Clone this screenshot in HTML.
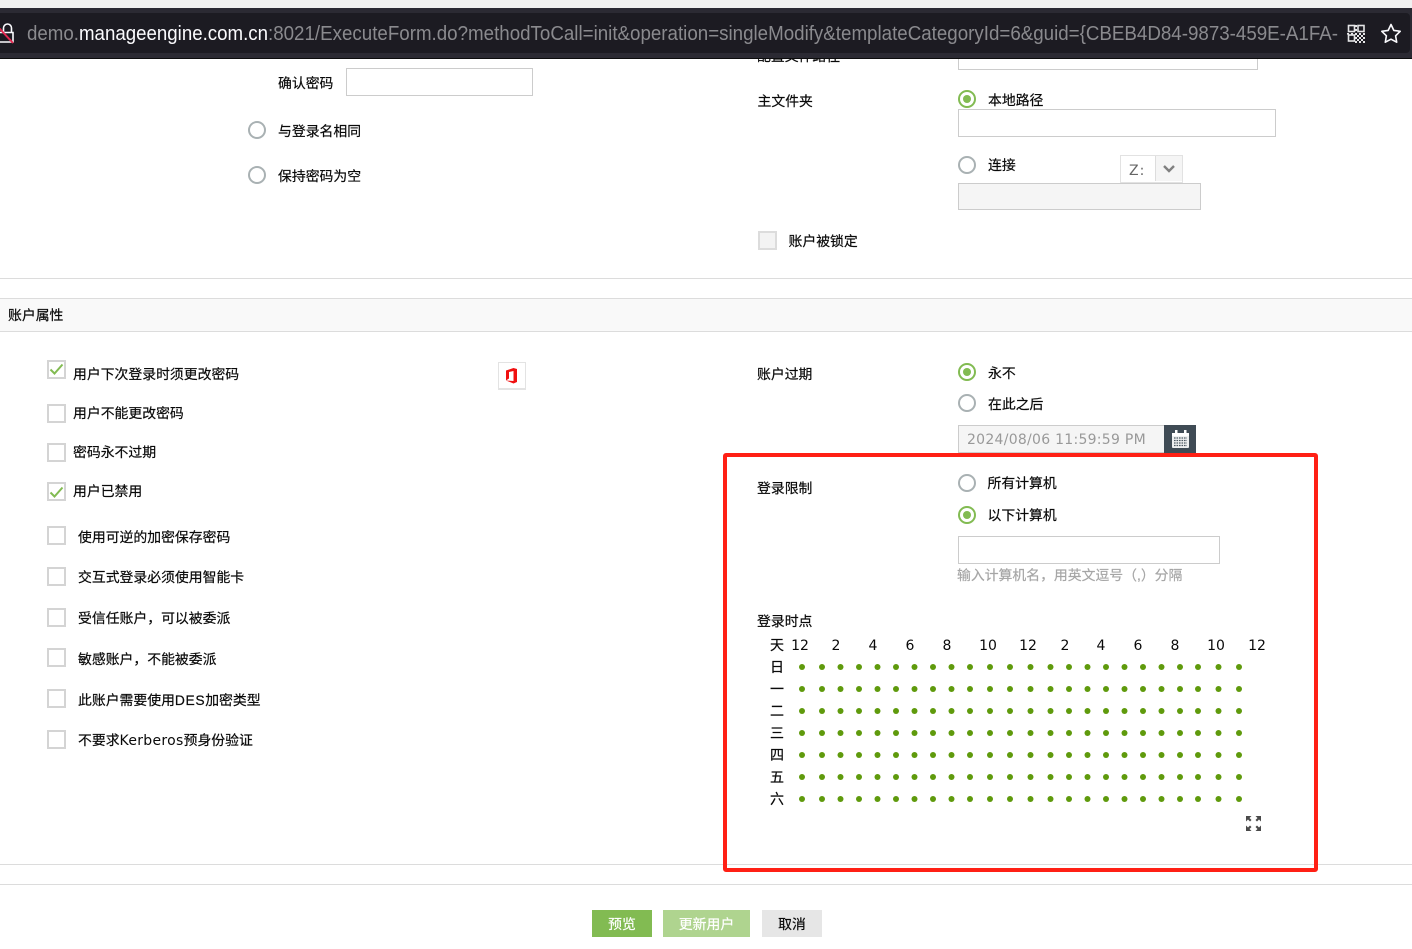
<!DOCTYPE html>
<html lang="zh">
<head>
<meta charset="utf-8">
<title>更新用户</title>
<style>
html,body{margin:0;padding:0;background:#fff;}
body{position:relative;width:1412px;height:949px;overflow:hidden;font-family:"Liberation Sans","Noto Sans CJK SC",sans-serif;font-size:13.85px;color:#0a0a0a;}
.t{position:absolute;line-height:20px;height:20px;white-space:nowrap;-webkit-text-stroke:.2px currentColor;}
.c{position:absolute;width:30px;text-align:center;line-height:20px;height:20px;white-space:nowrap;font-size:14px;-webkit-text-stroke:.2px currentColor;}
.n{font-family:"DejaVu Sans",sans-serif;margin-top:1px;-webkit-text-stroke:0;}
.t.n{font-size:14px;-webkit-text-stroke:0;margin-top:1px;}
.kb{font-family:"DejaVu Sans",sans-serif;font-size:14px;letter-spacing:.3px;-webkit-text-stroke:0;}
.r{position:absolute;width:14px;height:14px;border:2px solid #a9b1b3;border-radius:50%;background:#fff;}
.r.on{border-color:#82bb52;}
.r.on:after{content:"";position:absolute;left:3px;top:3px;width:8px;height:8px;border-radius:50%;background:#82bb52;}
.k{position:absolute;left:47px;width:15px;height:15px;border:2px solid #d4d4d4;background:#fff;}
.i{position:absolute;box-sizing:border-box;border:1px solid #ccc;background:#fff;}
.d{background:#f5f5f5;}
.h{position:absolute;left:0;width:1412px;height:1px;background:#dcdcdc;}
.b{position:absolute;top:910px;height:27px;line-height:29px;text-align:center;-webkit-text-stroke:.2px currentColor;}
svg{position:absolute;overflow:visible;}
</style>
</head>
<body>
<div class="t" style="left:757px;top:46px">配置文件路径</div>
<div class="i" style="left:958px;top:50px;width:300px;height:20px"></div>

<div style="position:absolute;left:0;top:0;width:1412px;height:8px;background:#f1f1f1"></div>
<div style="position:absolute;left:0;top:8px;width:1412px;height:50px;background:#2b2a33"></div>
<div style="position:absolute;left:0;top:13px;width:1410px;height:40px;background:#1c1b22;border-radius:0 4px 4px 0"></div>
<div style="position:absolute;left:0;top:58px;width:1412px;height:1px;background:#0c0c0d"></div>
<svg style="left:0;top:0" width="1412" height="59">
  <g font-family="Liberation Sans, sans-serif" font-size="20">
    <text x="27" y="40" fill="#8a8a8e" textLength="52" lengthAdjust="spacingAndGlyphs">demo.</text>
    <text x="79" y="40" fill="#fbfbfe" textLength="189" lengthAdjust="spacingAndGlyphs">manageengine.com.cn</text>
    <text x="268" y="40" fill="#8a8a8e" textLength="1070" lengthAdjust="spacingAndGlyphs">:8021/ExecuteForm.do?methodToCall=init&amp;operation=singleModify&amp;templateCategoryId=6&amp;guid={CBEB4D84-9873-459E-A1FA-</text>
  </g>
  <!-- lock -->
  <path d="M3.500 32V28a4 4 0 0 1 8 0v4" fill="none" stroke="#fbfbfe" stroke-width="1.600"/>
  <path d="M-2 32.500h15v9.500H-2z" fill="none" stroke="#fbfbfe" stroke-width="1.600"/>
  <path d="M-1 28L13 43" stroke="#e22850" stroke-width="2"/>
  <!-- QR -->
  <g fill="none" stroke="#e4e4e6" stroke-width="1.600">
    <rect x="1348.500" y="25.500" width="6" height="6"/>
    <rect x="1358" y="25.500" width="6" height="6"/>
    <rect x="1348.500" y="35" width="6" height="6"/>
  </g>
  <g fill="#e4e4e6">
    <rect x="1347" y="33" width="2" height="1.600"/><rect x="1351" y="33" width="2" height="1.600"/><rect x="1355" y="33" width="2" height="2"/><rect x="1359" y="33" width="2" height="2"/><rect x="1363" y="33" width="2" height="2"/>
    <rect x="1357" y="35" width="2" height="2"/><rect x="1361" y="35" width="2" height="2"/><rect x="1355" y="37" width="2" height="2"/><rect x="1359" y="37" width="2" height="2"/><rect x="1363" y="37" width="2" height="2"/>
    <rect x="1357" y="39" width="2" height="2"/><rect x="1361" y="39" width="2" height="2"/><rect x="1355" y="41" width="2" height="2"/><rect x="1359" y="41" width="2" height="2"/><rect x="1363" y="41" width="2" height="2"/>
    <rect x="1355" y="25" width="2" height="2"/><rect x="1355" y="29" width="2" height="2"/>
  </g>
  <!-- star -->
  <path d="M1391 24.500l2.800 5.900 6.400.9-4.600 4.500 1.100 6.400-5.700-3-5.700 3 1.100-6.400-4.600-4.500 6.400-.9z" fill="none" stroke="#fbfbfe" stroke-width="1.600" stroke-linejoin="round"/>
</svg>

<!-- upper left -->
<div class="t" style="left:278px;top:73px">确认密码</div>
<div class="i" style="left:346px;top:68px;width:187px;height:28px"></div>
<div class="r" style="left:248px;top:121px"></div>
<div class="t" style="left:278px;top:121px">与登录名相同</div>
<div class="r" style="left:248px;top:166px"></div>
<div class="t" style="left:278px;top:166px">保持密码为空</div>

<!-- upper right -->
<div class="t" style="left:757.500px;top:91px">主文件夹</div>
<div class="r on" style="left:958px;top:90px"></div>
<div class="t" style="left:988px;top:90px">本地路径</div>
<div class="i" style="left:958px;top:109px;width:318px;height:28px"></div>
<div class="r" style="left:958px;top:156px"></div>
<div class="t" style="left:988px;top:155px">连接</div>
<div class="i" style="left:1120px;top:155px;width:63px;height:28px;border-color:#e2e2e2"></div>
<div style="position:absolute;left:1155px;top:156px;width:27px;height:25px;background:#f5f5f5;border-left:1px solid #ddd;box-sizing:border-box"></div>
<div class="t n" style="left:1129px;top:160px;color:#666;letter-spacing:1px">Z:</div>
<svg style="left:1155px;top:155px" width="28" height="28"><path d="M9 11l5 5 5-5" fill="none" stroke="#808080" stroke-width="2.400"/></svg>
<div class="i d" style="left:958px;top:183px;width:243px;height:27px"></div>
<div class="k" style="left:758px;top:231px;background:#f3f3f3;border-color:#dcdcdc"></div>
<div class="t" style="left:788.500px;top:231px">账户被锁定</div>

<div class="h" style="top:278px"></div>
<div style="position:absolute;left:0;top:298px;width:1412px;height:34px;box-sizing:border-box;background:#f9f9f9;border-top:1px solid #dcdcdc;border-bottom:1px solid #dcdcdc"></div>
<div class="t" style="left:8px;top:305px">账户属性</div>

<!-- checkboxes -->
<div class="k" style="top:360px"></div>
<svg style="left:47px;top:360px" width="19" height="19"><path d="M3.500 9.500l4 4 8-9" fill="none" stroke="#82bb52" stroke-width="2"/></svg>
<div class="t" style="left:73px;top:364px">用户下次登录时须更改密码</div>
<div class="k" style="top:404px"></div>
<div class="t" style="left:73px;top:403px">用户不能更改密码</div>
<div class="k" style="top:443px"></div>
<div class="t" style="left:73px;top:442px">密码永不过期</div>
<div class="k" style="top:482px"></div>
<svg style="left:47px;top:482px" width="19" height="19"><path d="M3.500 10.500l4 4 8-9" fill="none" stroke="#82bb52" stroke-width="2"/></svg>
<div class="t" style="left:73px;top:481px">用户已禁用</div>
<div class="k" style="top:526px"></div>
<div class="t" style="left:78px;top:527px">使用可逆的加密保存密码</div>
<div class="k" style="top:567px"></div>
<div class="t" style="left:78px;top:567px">交互式登录必须使用智能卡</div>
<div class="k" style="top:608px"></div>
<div class="t" style="left:78px;top:608px">受信任账户，可以被委派</div>
<div class="k" style="top:648px"></div>
<div class="t" style="left:78px;top:649px">敏感账户，不能被委派</div>
<div class="k" style="top:689px"></div>
<div class="t" style="left:78px;top:690px">此账户需要使用<span style="letter-spacing:.6px">DES</span>加密类型</div>
<div class="k" style="top:730px"></div>
<div class="t" style="left:78px;top:730px">不要求<span class="kb">Kerberos</span>预身份验证</div>

<!-- office -->
<div style="position:absolute;left:498px;top:362px;width:28px;height:28px;box-sizing:border-box;border:1px solid #e3e3e3;border-bottom-width:2px;background:#fff"></div>
<svg style="left:504px;top:367px" width="16" height="17"><path d="M2 3.500L9.500 1 13 2v13l-3.500 1.500L2 13.500 9.500 14V4L5 5v6.500l-3 2z" fill="#f01010"/></svg>

<!-- expiry -->
<div class="t" style="left:757px;top:364px">账户过期</div>
<div class="r on" style="left:958px;top:363px"></div>
<div class="t" style="left:988px;top:363px">永不</div>
<div class="r" style="left:958px;top:394px"></div>
<div class="t" style="left:988px;top:394px">在此之后</div>
<div class="i d" style="left:958px;top:425px;width:207px;height:28px"></div>
<div class="t n" style="left:967px;top:429px;color:#999;letter-spacing:.27px">2024/08/06 11:59:59 PM</div>
<div style="position:absolute;left:1164px;top:425px;width:32px;height:28px;background:#3f4b55"></div>
<svg style="left:1164px;top:425px" width="32" height="28">
  <rect x="8" y="8" width="17" height="15" rx="1" fill="#eef0f1"/>
  <rect x="8" y="8" width="17" height="3" fill="#fff"/>
  <rect x="11" y="5" width="2.500" height="6" fill="#fff"/><rect x="20" y="5" width="2.500" height="6" fill="#fff"/>
  <path d="M10 13h13M10 15.500h13M10 18h13M10 20.500h13" stroke="#4c5862" stroke-width="1.200" stroke-dasharray="1.600 .9"/>
</svg>

<!-- login restriction -->
<div class="t" style="left:757px;top:478px">登录限制</div>
<div class="r" style="left:958px;top:474px"></div>
<div class="t" style="left:987.500px;top:473px">所有计算机</div>
<div class="r on" style="left:958px;top:506px"></div>
<div class="t" style="left:987.500px;top:505px">以下计算机</div>
<div class="i" style="left:958px;top:536px;width:262px;height:28px"></div>
<div class="t" style="left:957px;top:565px;color:#a6a6a6;">输入计算机名，用英文逗号（,）分隔</div>
<div class="t" style="left:757px;top:611px">登录时点</div>

<!-- hours header -->
<div class="c" style="left:762px;top:635px">天</div>
<div class="c n" style="left:785px;top:635px">12</div>
<div class="c n" style="left:821px;top:635px">2</div>
<div class="c n" style="left:858px;top:635px">4</div>
<div class="c n" style="left:895px;top:635px">6</div>
<div class="c n" style="left:932px;top:635px">8</div>
<div class="c n" style="left:973px;top:635px">10</div>
<div class="c n" style="left:1013px;top:635px">12</div>
<div class="c n" style="left:1050px;top:635px">2</div>
<div class="c n" style="left:1086px;top:635px">4</div>
<div class="c n" style="left:1123px;top:635px">6</div>
<div class="c n" style="left:1160px;top:635px">8</div>
<div class="c n" style="left:1201px;top:635px">10</div>
<div class="c n" style="left:1242px;top:635px">12</div>

<div class="c" style="left:762px;top:657px">日</div>
<div class="c" style="left:762px;top:679px">一</div>
<div class="c" style="left:762px;top:701px">二</div>
<div class="c" style="left:762px;top:723px">三</div>
<div class="c" style="left:762px;top:745px">四</div>
<div class="c" style="left:762px;top:767px">五</div>
<div class="c" style="left:762px;top:789px">六</div>

<svg style="left:0;top:0" width="1412" height="949">
  <defs>
    <g id="row" fill="#5f9a0c">
      <circle cx="802" cy="0" r="3"/><circle cx="822" cy="0" r="3"/><circle cx="840.500" cy="0" r="3"/><circle cx="859" cy="0" r="3"/>
      <circle cx="877.500" cy="0" r="3"/><circle cx="896" cy="0" r="3"/><circle cx="914.500" cy="0" r="3"/><circle cx="933" cy="0" r="3"/>
      <circle cx="951.500" cy="0" r="3"/><circle cx="970" cy="0" r="3"/><circle cx="990" cy="0" r="3"/><circle cx="1010" cy="0" r="3"/>
      <circle cx="1030.500" cy="0" r="3"/><circle cx="1050.500" cy="0" r="3"/><circle cx="1069" cy="0" r="3"/><circle cx="1087.500" cy="0" r="3"/>
      <circle cx="1106" cy="0" r="3"/><circle cx="1124.500" cy="0" r="3"/><circle cx="1143" cy="0" r="3"/><circle cx="1161.500" cy="0" r="3"/>
      <circle cx="1180" cy="0" r="3"/><circle cx="1198" cy="0" r="3"/><circle cx="1218.500" cy="0" r="3"/><circle cx="1239" cy="0" r="3"/>
    </g>
  </defs>
  <use href="#row" y="667"/><use href="#row" y="689"/><use href="#row" y="711"/><use href="#row" y="733"/><use href="#row" y="755"/><use href="#row" y="777"/><use href="#row" y="799"/>
  <!-- expand icon -->
  <g fill="#4a4a4a">
    <path d="M1246 816h5.500l-2 2 2 2-1.500 1.500-2-2-2 2z"/>
    <path d="M1261 816h-5.500l2 2-2 2 1.500 1.500 2-2 2 2z"/>
    <path d="M1246 831h5.500l-2-2 2-2-1.500-1.500-2 2-2-2z"/>
    <path d="M1261 831h-5.500l2-2-2-2 1.500-1.500 2 2 2-2z"/>
  </g>
</svg>

<div class="h" style="top:864px"></div>
<div class="h" style="top:884px"></div>

<!-- red annotation -->
<div style="position:absolute;left:723px;top:453px;width:595px;height:419px;box-sizing:border-box;border:4px solid #ff2015;border-radius:3px"></div>

<!-- buttons -->
<div class="b" style="left:592px;width:60px;background:#82bb52;color:#fff">预览</div>
<div class="b" style="left:663px;width:87px;background:#afd48f;color:#fff">更新用户</div>
<div class="b" style="left:762px;width:60px;background:#e6e6e6;color:#0a0a0a">取消</div>
</body>
</html>
